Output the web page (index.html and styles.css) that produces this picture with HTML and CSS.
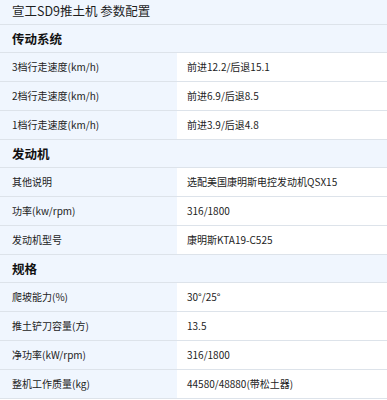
FILE: index.html
```html
<!DOCTYPE html>
<html lang="zh">
<head>
<meta charset="utf-8">
<link rel="stylesheet" href="styles.css">
</head>
<body>
<div class="spec">
  <div class="title">宣工SD9推土机 参数配置</div>
  <div class="section">传动系统</div>
  <div class="row"><div class="k">3档行走速度(km/h)</div><div class="v">前进12.2/后退15.1</div></div>
  <div class="row"><div class="k">2档行走速度(km/h)</div><div class="v">前进6.9/后退8.5</div></div>
  <div class="row"><div class="k">1档行走速度(km/h)</div><div class="v">前进3.9/后退4.8</div></div>
  <div class="section">发动机</div>
  <div class="row"><div class="k">其他说明</div><div class="v">选配美国康明斯电控发动机QSX15</div></div>
  <div class="row"><div class="k">功率(kw/rpm)</div><div class="v">316/1800</div></div>
  <div class="row"><div class="k">发动机型号</div><div class="v">康明斯KTA19-C525</div></div>
  <div class="section">规格</div>
  <div class="row"><div class="k">爬坡能力(%)</div><div class="v">30°/25°</div></div>
  <div class="row"><div class="k">推土铲刀容量(方)</div><div class="v">13.5</div></div>
  <div class="row"><div class="k">净功率(kW/rpm)</div><div class="v">316/1800</div></div>
  <div class="row"><div class="k">整机工作质量(kg)</div><div class="v">44580/48880(带松土器)</div></div>
</div>
</body>
</html>
```

FILE: styles.css
```css
html, body {
  margin: 0;
  padding: 0;
  background: #ffffff;
}
.spec {
  width: 387px;
  font-family: "Noto Sans CJK SC", "Liberation Sans", sans-serif;
  color: #222222;
}
.title {
  height: 24px;
  line-height: 22px;
  padding-left: 12px;
  font-size: 12.5px;
  color: #1e1e1e;
  background: #f0f6fe;
  border-bottom: 1px solid #dde3ea;
}
.section {
  height: 27px;
  line-height: 27px;
  padding-left: 12px;
  font-size: 12.5px;
  font-weight: bold;
  color: #111;
  background: #f0f6fe;
  border-bottom: 1px solid #dde3ea;
}
.row {
  display: grid;
  grid-template-columns: 177px 1fr;
  height: 28px;
  border-bottom: 1px solid #dde3ea;
  font-size: 10px;
  line-height: 28px;
}
.k {
  background: #f0f6fe;
  padding-left: 12px;
}
.v {
  background: #ffffff;
  padding-left: 10px;
}
```
